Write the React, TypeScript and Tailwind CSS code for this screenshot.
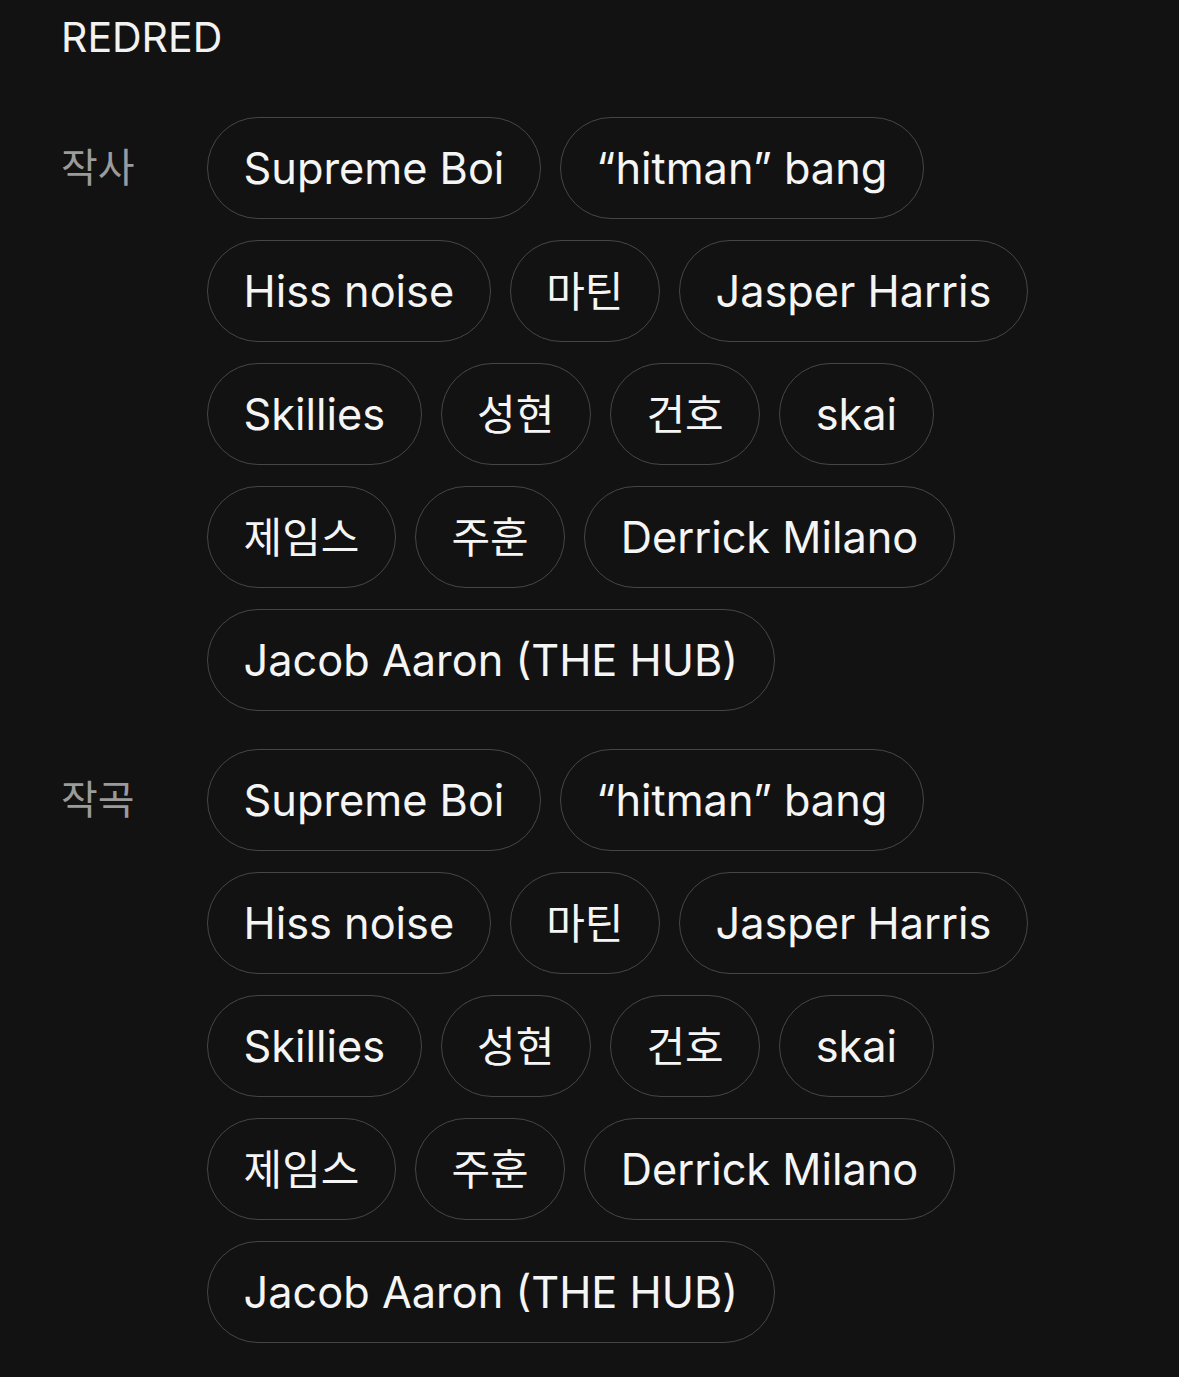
const NAMES = [
  "Supreme Boi",
  "“hitman” bang",
  "Hiss noise",
  "마틴",
  "Jasper Harris",
  "Skillies",
  "성현",
  "건호",
  "skai",
  "제임스",
  "주훈",
  "Derrick Milano",
  "Jacob Aaron (THE HUB)",
];

const CREDITS = [
  { role: "작사", names: NAMES },
  { role: "작곡", names: NAMES },
];

const isHangul = (s: string) => /[\uAC00-\uD7A3]/.test(s);

function Chip({ name }: { name: string }) {
  return (
    <span
      className={
        "h-[102px] px-[35.5px] flex items-center rounded-full border-[1.5px] border-[#464646] text-[#f5f5f5] whitespace-nowrap " +
        (isHangul(name) ? "text-[42px]" : "text-[43.3px]")
      }
    >
      {name}
    </span>
  );
}

export default function App() {
  return (
    <div
      className="min-h-[1377px] w-full bg-[#121212] pl-[61px] pt-[7px]"
      style={{ fontFamily: 'Inter, "Noto Sans CJK KR", sans-serif' }}
    >
      <h1 className="text-[41px] leading-[60px] text-[#f2f2f2]">REDRED</h1>

      <div className="mt-[50px] flex flex-col gap-[38px]">
        {CREDITS.map((c) => (
          <div key={c.role} className="flex">
            <div className="w-[146px] shrink-0 h-[102px] flex items-center text-[40px] text-[#9b9b9b]">
              {c.role}
            </div>
            <div className="flex flex-wrap gap-x-[19px] gap-y-[21px] w-[880px]">
              {c.names.map((n) => (
                <Chip key={n} name={n} />
              ))}
            </div>
          </div>
        ))}
      </div>
    </div>
  );
}
